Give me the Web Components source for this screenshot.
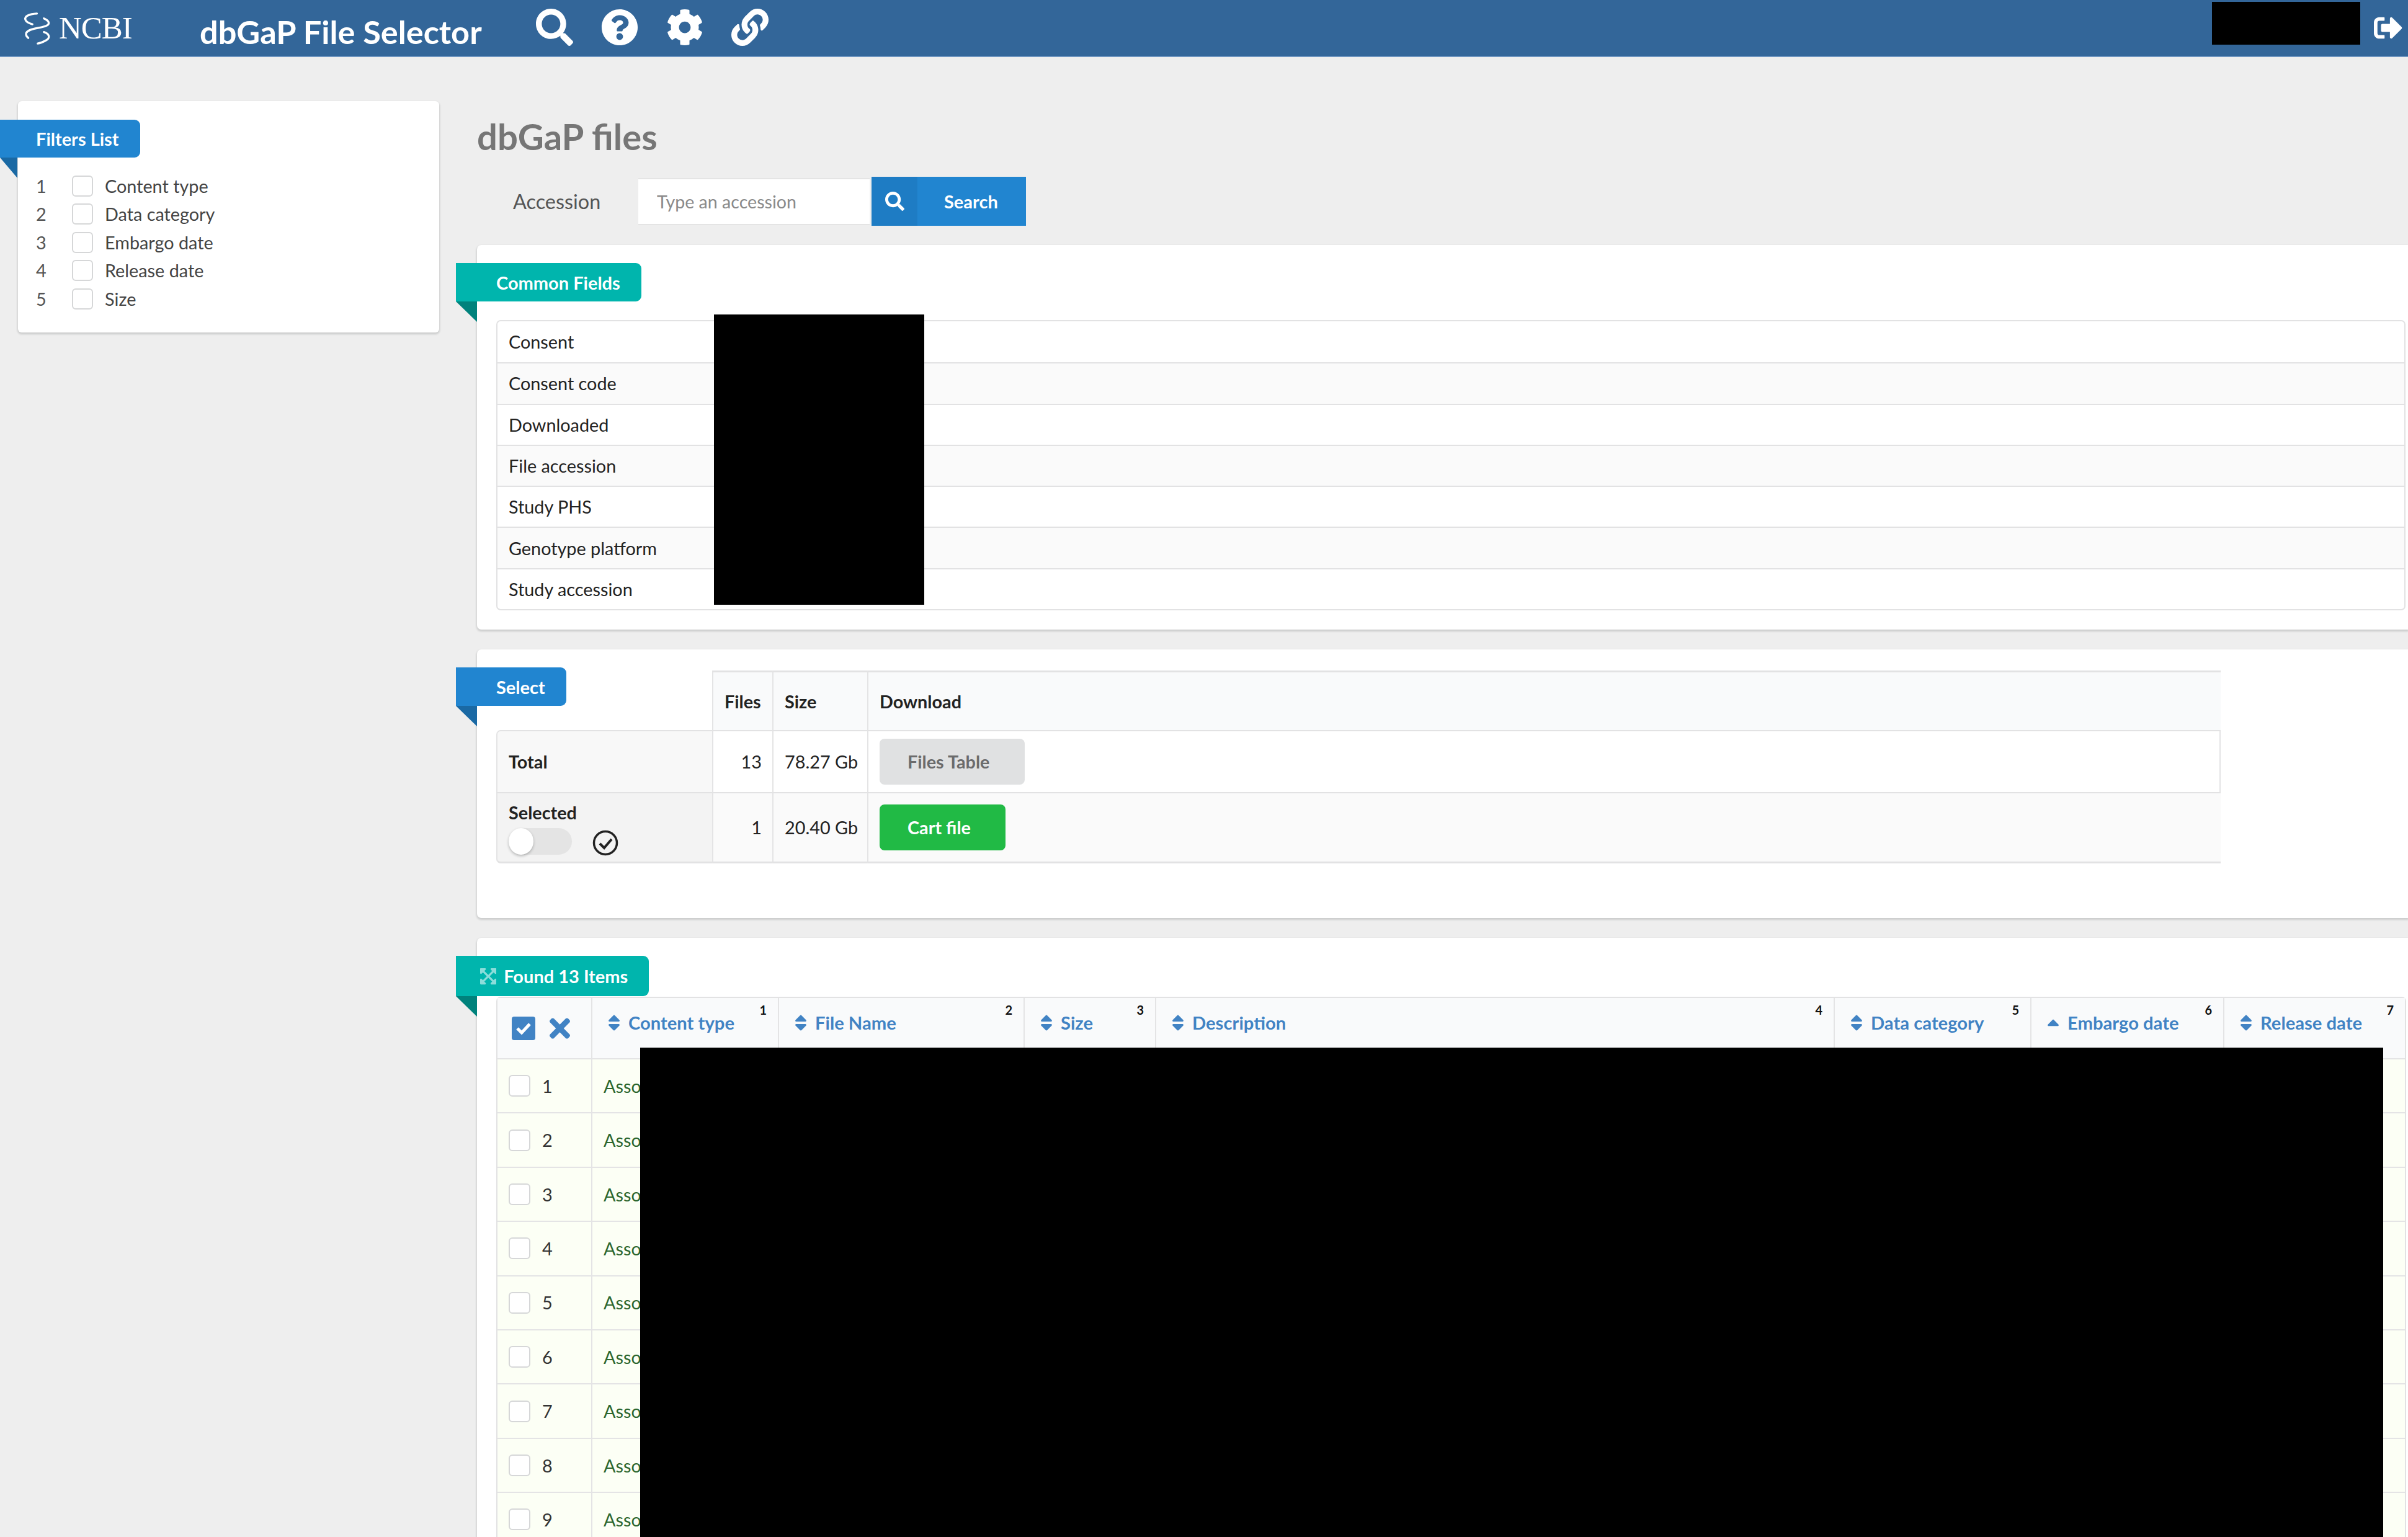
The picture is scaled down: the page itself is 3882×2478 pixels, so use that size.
<!doctype html>
<html lang="en">
<head>
<meta charset="utf-8">
<title>dbGaP File Selector</title>
<style>
	html, body { margin: 0; height: 100vh; overflow: hidden; background: #eeeeee; }
	body { font-family: Lato, "Open Sans", sans-serif; font-size: 28.8px; color: #333; }
</style>
</head>
<body>
<dbgap-app></dbgap-app>
<script>
const ICONS = {
	search: [512, "M505 442.7L405.3 343c-4.5-4.5-10.6-7-17-7H372c27.6-35.3 44-79.7 44-128C416 93.1 322.9 0 208 0S0 93.1 0 208s93.1 208 208 208c48.3 0 92.7-16.4 128-44v16.3c0 6.4 2.5 12.5 7 17l99.7 99.7c9.4 9.4 24.6 9.4 33.9 0l28.3-28.3c9.4-9.4 9.4-24.6.1-34zM208 336c-70.7 0-128-57.2-128-128 0-70.7 57.2-128 128-128 70.7 0 128 57.2 128 128 0 70.7-57.2 128-128 128z"],
	help: [512, "M504 256c0 136.997-111.043 248-248 248S8 392.997 8 256C8 119.083 119.043 8 256 8s248 111.083 248 248zM262.655 90c-54.497 0-89.255 22.957-116.549 63.758-3.536 5.286-2.353 12.415 2.715 16.258l34.699 26.31c5.205 3.947 12.621 3.008 16.665-2.122 17.864-22.658 30.113-35.797 57.303-35.797 20.429 0 45.698 13.148 45.698 32.958 0 14.976-12.363 22.667-32.534 33.976C247.128 238.528 216 254.941 216 296v4c0 6.627 5.373 12 12 12h56c6.627 0 12-5.373 12-12v-1.333c0-28.462 83.186-29.647 83.186-106.667 0-58.002-60.165-102-116.531-102zM256 338c-25.365 0-46 20.635-46 46 0 25.364 20.635 46 46 46s46-20.636 46-46c0-25.365-20.635-46-46-46z"],
	cog: [512, "M487.4 315.7l-42.6-24.6c4.3-23.2 4.3-47 0-70.2l42.6-24.6c4.9-2.8 7.1-8.6 5.5-14-11.1-35.6-30-67.8-54.7-94.6-3.8-4.1-10-5.1-14.8-2.3L380.8 110c-17.9-15.4-38.5-27.3-60.8-35.1V25.8c0-5.6-3.9-10.5-9.4-11.7-36.7-8.2-74.3-7.8-109.2 0-5.5 1.2-9.4 6.1-9.4 11.7V75c-22.2 7.9-42.8 19.8-60.8 35.1L88.7 85.5c-4.9-2.8-11-1.9-14.8 2.3-24.7 26.7-43.6 58.9-54.7 94.6-1.7 5.4.6 11.2 5.5 14L67.3 221c-4.3 23.2-4.3 47 0 70.2l-42.6 24.6c-4.9 2.8-7.1 8.6-5.5 14 11.1 35.6 30 67.8 54.7 94.6 3.8 4.1 10 5.1 14.8 2.3l42.6-24.6c17.9 15.4 38.5 27.3 60.8 35.1v49.2c0 5.6 3.9 10.5 9.4 11.7 36.7 8.2 74.3 7.8 109.2 0 5.5-1.2 9.4-6.1 9.4-11.7v-49.2c22.2-7.9 42.8-19.8 60.8-35.1l42.6 24.6c4.9 2.8 11 1.9 14.8-2.3 24.7-26.7 43.6-58.9 54.7-94.6 1.5-5.5-.7-11.3-5.6-14.1zM256 336c-44.1 0-80-35.9-80-80s35.9-80 80-80 80 35.9 80 80-35.9 80-80 80z"],
	link: [512, "M326.612 185.391c59.747 59.809 58.927 155.698.36 214.59-.11.12-.24.25-.36.37l-67.2 67.2c-59.27 59.27-155.699 59.262-214.96 0-59.27-59.26-59.27-155.7 0-214.96l37.106-37.106c9.84-9.84 26.786-3.3 27.294 10.606.648 17.722 3.826 35.527 9.69 52.721 1.986 5.822.567 12.262-3.783 16.612l-13.087 13.087c-28.026 28.026-28.905 73.66-1.155 101.96 28.024 28.579 74.086 28.749 102.325.51l67.2-67.19c28.191-28.191 28.073-73.757 0-101.83-3.701-3.694-7.429-6.564-10.341-8.569a16.037 16.037 0 0 1-6.947-12.606c-.396-10.567 3.348-21.456 11.698-29.806l21.054-21.055c5.521-5.521 14.182-6.199 20.584-1.731a152.482 152.482 0 0 1 20.522 17.197zM467.547 44.449c-59.261-59.262-155.69-59.27-214.96 0l-67.2 67.2c-.12.12-.25.25-.36.37-58.566 58.892-59.387 154.781.36 214.59a152.454 152.454 0 0 0 20.521 17.196c6.402 4.468 15.064 3.789 20.584-1.731l21.054-21.055c8.35-8.35 12.094-19.239 11.698-29.806a16.037 16.037 0 0 0-6.947-12.606c-2.912-2.005-6.64-4.875-10.341-8.569-28.073-28.073-28.191-73.639 0-101.83l67.2-67.19c28.239-28.239 74.3-28.069 102.325.51 27.75 28.3 26.872 73.934-1.155 101.96l-13.087 13.087c-4.35 4.35-5.769 10.79-3.783 16.612 5.864 17.194 9.042 34.999 9.69 52.721.509 13.906 17.454 20.446 27.294 10.606l37.106-37.106c59.271-59.259 59.271-155.699.001-214.959z"],
	signout: [512, "M497 273L329 441c-15 15-41 4.5-41-17v-96H152c-13.3 0-24-10.7-24-24v-96c0-13.3 10.7-24 24-24h136V88c0-21.4 25.9-32 41-17l168 168c9.3 9.4 9.3 24.6 0 34zM192 436v-40c0-6.6-5.4-12-12-12H96c-17.7 0-32-14.3-32-32V160c0-17.7 14.3-32 32-32h84c6.6 0 12-5.4 12-12V76c0-6.6-5.4-12-12-12H96c-53 0-96 43-96 96v192c0 53 43 96 96 96h84c6.6 0 12-5.4 12-12z"],
	arrows: [448, "M448 344v112a23.94 23.94 0 0 1-24 24H312c-21.39 0-32.09-25.9-17-41l36.2-36.2L224 295.6 116.77 402.9 153 439c15.09 15.1 4.39 41-17 41H24a23.94 23.94 0 0 1-24-24V344c0-21.4 25.89-32.1 41-17l36.19 36.2L184.46 256 77.18 148.7 41 185c-15.1 15.1-41 4.4-41-17V56a23.94 23.94 0 0 1 24-24h112c21.39 0 32.09 25.9 17 41l-36.2 36.2L224 216.4l107.23-107.3L295 73c-15.09-15.1-4.39-41 17-41h112a23.94 23.94 0 0 1 24 24v112c0 21.4-25.89 32.1-41 17l-36.19-36.2L263.54 256l107.28 107.3L407 327.1c15.1-15.2 41-4.5 41 16.9z"],
	times: [352, "M242.72 256l100.07-100.07c12.28-12.28 12.28-32.19 0-44.48l-22.24-22.24c-12.28-12.28-32.19-12.28-44.48 0L176 189.28 75.93 89.21c-12.28-12.28-32.19-12.28-44.48 0L9.21 111.45c-12.28 12.28-12.28 32.19 0 44.48L109.28 256 9.21 356.07c-12.28 12.28-12.28 32.19 0 44.48l22.24 22.24c12.28 12.28 32.2 12.28 44.48 0L176 322.72l100.07 100.07c12.28 12.28 32.2 12.28 44.48 0l22.24-22.24c12.28-12.28 12.28-32.19 0-44.48L242.72 256z"],
	sort: [320, "M41 288h238c21.4 0 32.1 25.9 17 41L177 448c-9.4 9.4-24.6 9.4-33.9 0L24 329c-15.1-15.1-4.4-41 17-41zm255-105L177 64c-9.4-9.4-24.6-9.4-33.9 0L24 183c-15.1 15.1-4.4 41 17 41h238c21.4 0 32.1-25.9 17-41z"],
	sortUp: [320, "M279 340H41c-21.4 0-32.1-25.9-17-41L143 180c9.4-9.4 24.6-9.4 33.9 0l119 119c15.2 15.1 4.5 41-16.9 41z"],
};

function icon(name, height) {
	const [boxWidth, d] = ICONS[name];
	return `<svg width="${(height * boxWidth) / 512}" height="${height}" viewBox="0 0 ${boxWidth} 512" fill="currentColor" style="display:block;flex:none" aria-hidden="true"><path d="${d}"/></svg>`;
}

class DbgapCheckbox extends HTMLElement {
	connectedCallback() {
		const size = this.getAttribute("size") || "34";
		this.attachShadow({ mode: "open" }).innerHTML = `
			<style>
				:host { display: block; flex: none; width: ${size}px; height: ${size}px; }
				div { box-sizing: border-box; width: 100%; height: 100%; background: #fff; border: 2px solid #d6d7d8; border-radius: 6px; }
			</style>
			<div></div>
		`;
	}
}

class DbgapRibbon extends HTMLElement {
	connectedCallback() {
		this.attachShadow({ mode: "open" }).innerHTML = `
			<style>
				:host {
					position: relative;
					box-sizing: border-box;
					width: fit-content;
					height: var(--ribbon-height, 62px);
					margin-left: var(--ribbon-shift, -65px);
					padding: 0 34px 0 var(--ribbon-pad, 65px);
					display: flex;
					align-items: center;
					gap: 12px;
					background: var(--ribbon-bg, #2185d0);
					color: #fff;
					font-weight: 700;
					font-size: 29px;
					border-radius: 0 9px 9px 0;
				}
				:host::after {
					content: "";
					position: absolute;
					left: 0;
					top: 100%;
					width: var(--ribbon-out, 34px);
					height: 33px;
					background: var(--ribbon-fold, #1a69a4);
					clip-path: polygon(0 0, 100% 0, 100% 100%);
				}
			</style>
			<slot></slot>
		`;
	}
}

class DbgapCard extends HTMLElement {
	connectedCallback() {
		this.attachShadow({ mode: "open" }).innerHTML = `
			<style>
				:host {
					display: block;
					box-sizing: border-box;
					background: #fff;
					border-radius: 7px 0 0 7px;
					padding: 29px 4px 31px 31px;
					box-shadow: 0 2px 3px 1px rgba(34, 36, 38, 0.16);
				}
			</style>
			<slot></slot>
		`;
	}
}

class DbgapHeader extends HTMLElement {
	connectedCallback() {
		const links = ["search", "help", "cog", "link"];
		this.attachShadow({ mode: "open" }).innerHTML = `
			<style>
				:host {
					display: flex;
					align-items: center;
					position: relative;
					box-sizing: border-box;
					height: 92px;
					background: #336699;
					border-bottom: 2px solid #6b93bf;
					color: #fff;
				}
				.logo { display: flex; align-items: center; width: 322px; padding-left: 37px; box-sizing: border-box; }
				.logo svg { flex: none; margin-right: 10px; }
				.logo span { font: 51px/1 "Liberation Serif", serif; letter-spacing: -1px; }
				h1 { margin: 10px 0 0; width: 519px; font-size: 52.3px; font-weight: 700; white-space: nowrap; }
				.tool { display: flex; justify-content: center; width: 105px; margin-top: -2px; }
				.signout { margin: 0 0 0 auto; display: flex; padding-right: 9px; }
				.user { position: absolute; left: 3566px; top: 3px; width: 239px; height: 69px; background: #000; }
			</style>
			<div class="logo">
				<svg width="48" height="55" viewBox="20 25 145 165" fill="none" stroke="#fff" stroke-width="10" stroke-linecap="round" aria-hidden="true">
					<path d="M88 36C50 38 26 50 32 66C36 78 50 84 66 88"/>
					<path d="M122 60C145 70 155 85 135 95C110 108 50 105 36 130C32 142 40 150 46 155"/>
					<path d="M122 126C150 135 155 155 130 168C115 176 105 180 92 182"/>
				</svg>
				<span>NCBI</span>
			</div>
			<h1>dbGaP File Selector</h1>
			${links.map((name) => `<div class="tool">${icon(name, 60)}</div>`).join("")}
			<div class="signout">${icon("signout", 46)}</div>
			<div class="user"></div>
		`;
	}
}

class DbgapFilters extends HTMLElement {
	connectedCallback() {
		const filters = ["Content type", "Data category", "Embargo date", "Release date", "Size"];
		this.attachShadow({ mode: "open" }).innerHTML = `
			<style>
				:host {
					display: block;
					box-sizing: border-box;
					height: 373px;
					margin-left: 29px;
					padding: 30px 0 0 29px;
					background: #fff;
					border-radius: 6px;
					box-shadow: 0 2px 3px 1px rgba(34, 36, 38, 0.16);
					--ribbon-shift: -58px;
					--ribbon-out: 28px;
					--ribbon-pad: 58px;
					--ribbon-height: 61px;
				}
				ol { list-style: none; margin: 23px 0 0; padding: 0; color: #444; }
				li { display: flex; align-items: center; height: 45.5px; }
				.n { width: 58px; color: #555; }
				dbgap-checkbox { margin-right: 19px; }
			</style>
			<dbgap-ribbon>Filters List</dbgap-ribbon>
			<ol>
				${filters.map((f, i) => `<li><span class="n">${i + 1}</span><dbgap-checkbox></dbgap-checkbox><span>${f}</span></li>`).join("")}
			</ol>
		`;
	}
}

class DbgapSearch extends HTMLElement {
	connectedCallback() {
		this.attachShadow({ mode: "open" }).innerHTML = `
			<style>
				:host { display: flex; align-items: center; height: 79px; padding-left: 58px; }
				label { width: 202px; color: #555; font-size: 32.4px; }
				input {
					box-sizing: border-box;
					width: 373px;
					height: 76px;
					margin-right: 3px;
					padding: 0 30px;
					font: 28.6px Lato, sans-serif;
					border: 0;
					border-top: 2px solid #e4e4e4;
					border-bottom: 2px solid #e4e4e4;
					outline: 0;
				}
				input::placeholder { color: #8a8a8a; opacity: 1; }
				button {
					display: flex;
					align-items: center;
					box-sizing: border-box;
					width: 249px;
					height: 79px;
					padding: 0;
					border: 0;
					background: #2185d0;
					color: #fff;
					font: 700 29px Lato, sans-serif;
				}
				.ic { display: flex; align-items: center; justify-content: center; width: 74px; height: 100%; background: #1e7cc4; }
				.tx { margin-left: 43px; }
			</style>
			<label>Accession</label>
			<input placeholder="Type an accession">
			<button><span class="ic">${icon("search", 31)}</span><span class="tx">Search</span></button>
		`;
	}
}

class DbgapCommonFields extends HTMLElement {
	connectedCallback() {
		const fields = ["Consent", "Consent code", "Downloaded", "File accession", "Study PHS", "Genotype platform", "Study accession"];
		this.attachShadow({ mode: "open" }).innerHTML = `
			<style>
				:host { display: block; box-sizing: border-box; border: 2px solid #e2e2e3; border-radius: 7px; color: #222; }
				div { box-sizing: border-box; display: flex; align-items: center; height: 66.3px; padding-left: 18px; border-top: 2px solid #e2e2e3; }
				div:first-of-type { border-top: 0; }
				div:nth-of-type(even) { background: #fafafa; }
			</style>
			${fields.map((f) => `<div>${f}</div>`).join("")}
		`;
	}
}

class DbgapSelectSummary extends HTMLElement {
	connectedCallback() {
		this.attachShadow({ mode: "open" }).innerHTML = `
			<style>
				:host { display: block; width: 2780px; color: #222; }
				table { width: 100%; table-layout: fixed; border-collapse: separate; border-spacing: 0; }
				th, td { box-sizing: border-box; padding: 0 0 0 18px; border-left: 2px solid #e4e4e5; border-top: 2px solid #e2e2e3; text-align: left; }
				thead th { height: 96px; background: #f9fafb; font-weight: 700; border-top-width: 3px; }
				thead th.blank { background: none; border: 0; }
				tr.total td { height: 100px; background: #fff; }
				tr.total td:last-child { border-right: 2px solid #e4e4e5; }
				tr.selected td { height: 115px; background: #fafafa; border-bottom: 3px solid #e2e2e3; }
				th[scope="row"] { font-weight: 700; border-left-width: 2px; }
				tr.total th { background: #f8f8f8; border-radius: 7px 0 0 0; }
				tr.selected th { background: #f3f3f3; border-bottom: 3px solid #e2e2e3; border-radius: 0 0 0 7px; vertical-align: top; padding-top: 14px; line-height: 34px; }
				td.num { padding: 0 17px 0 0; text-align: right; }
				.btn { display: flex; align-items: center; box-sizing: border-box; height: 74px; padding-left: 45px; border-radius: 8px; font-weight: 700; }
				.files { width: 234px; background: #e0e1e2; color: #6b6b6c; }
				.cart { width: 203px; background: #21ba45; color: #fff; }
				.state { display: flex; align-items: center; margin-top: 5px; }
				.toggle { position: relative; width: 102px; height: 43px; border-radius: 22px; background: #e4e4e4; }
				.toggle::after { content: ""; position: absolute; left: 0; top: 0; width: 40px; height: 43px; border-radius: 50%; background: #fff; box-shadow: 0 2px 4px rgba(34, 36, 38, 0.3); }
				.check { margin: 6px 0 0 33px; }
			</style>
			<table>
				<colgroup><col style="width:348px"><col style="width:97px"><col style="width:153px"><col></colgroup>
				<thead><tr><th class="blank"></th><th>Files</th><th>Size</th><th>Download</th></tr></thead>
				<tbody>
					<tr class="total"><th scope="row">Total</th><td class="num">13</td><td>78.27 Gb</td><td><div class="btn files">Files Table</div></td></tr>
					<tr class="selected">
						<th scope="row">Selected
							<div class="state">
								<div class="toggle"></div>
								<svg class="check" width="42" height="42" viewBox="0 0 42 42" fill="none" stroke="#222" aria-hidden="true"><circle cx="21" cy="21" r="18.5" stroke-width="3.5"/><path d="M12 22l7 7 12-14" stroke-width="4"/></svg>
							</div>
						</th>
						<td class="num">1</td><td>20.40 Gb</td><td><div class="btn cart">Cart file</div></td>
					</tr>
				</tbody>
			</table>
		`;
	}
}

class DbgapFilesTable extends HTMLElement {
	connectedCallback() {
		const columns = [
			["Content type", 301, "sort"], ["File Name", 396, "sort"], ["Size", 212, "sort"], ["Description", 1094, "sort"],
			["Data category", 317, "sort"], ["Embargo date", 311, "sortUp"], ["Release date", 293, "sort"],
		];
		const rows = [1, 2, 3, 4, 5, 6, 7, 8, 9];
		this.attachShadow({ mode: "open" }).innerHTML = `
			<style>
				:host { display: block; position: relative; color: #2c662d; }
				table { width: 100%; table-layout: fixed; border-collapse: separate; border-spacing: 0; border: 2px solid #e2e2e3; border-bottom: 0; border-radius: 7px 7px 0 0; }
				th, td { box-sizing: border-box; border-left: 2px solid #e4e4e5; text-align: left; padding: 0; }
				th:first-child, td:first-child { border-left: 0; }
				thead th { position: relative; height: 97px; background: #f9fafb; color: #4183c4; font-weight: 700; font-size: 29.2px; vertical-align: top; }
				td { height: 87.4px; background: #fcfff5; border-top: 2px solid #e4e4e5; }
				.title { display: flex; align-items: center; gap: 13px; margin: 22px 0 0 25px; white-space: nowrap; }
				sup { position: absolute; top: 6px; right: 18px; color: #111; font-size: 20px; line-height: 26px; }
				.tools { display: flex; align-items: center; gap: 23px; margin: 25px 0 0 23px; color: #4183c4; }
				.all { display: flex; align-items: center; justify-content: center; width: 38px; height: 38px; background: #4183c4; border-radius: 4px; color: #fff; }
				.rowhead { display: flex; align-items: center; gap: 19px; padding-left: 18px; color: #333; }
				.cell { padding-left: 18px; }
			</style>
			<table>
				<colgroup><col style="width:151px">${columns.map((c) => `<col style="width:${c[1]}px">`).join("")}</colgroup>
				<thead>
					<tr>
						<th>
							<div class="tools">
								<span class="all"><svg width="26" height="22" viewBox="0 0 26 22" fill="none" stroke="#fff" stroke-width="5" aria-hidden="true"><path d="M3 11l7 7L23 4"/></svg></span>
								${icon("times", 48)}
							</div>
						</th>
						${columns.map((c, i) => `<th><div class="title">${icon(c[2], 32)}<span>${c[0]}</span></div><sup>${i + 1}</sup></th>`).join("")}
					</tr>
				</thead>
				<tbody>
					${rows.map((n) => `<tr><td><div class="rowhead"><dbgap-checkbox size="35"></dbgap-checkbox><span>${n}</span></div></td><td class="cell">Asso</td><td></td><td></td><td></td><td></td><td></td><td></td></tr>`).join("")}
				</tbody>
			</table>
		`;
	}
}

class DbgapRedaction extends HTMLElement {
	connectedCallback() {
		this.attachShadow({ mode: "open" }).innerHTML = `
			<style>
				:host { display: block; position: absolute; background: #000; }
			</style>
		`;
	}
}

class DbgapApp extends HTMLElement {
	connectedCallback() {
		this.attachShadow({ mode: "open" }).innerHTML = `
			<style>
				:host { display: block; }
				.page { display: grid; grid-template-columns: 708px 1fr; column-gap: 61px; position: relative; }
				aside { padding-top: 71px; }
				main { min-width: 0; }
				h2 { margin: 0; padding-top: 93px; font-size: 58px; line-height: 70px; font-weight: 700; color: #767676; }
				dbgap-search { margin-top: 30px; margin-bottom: 31px; }
				dbgap-card { margin-bottom: 32px; }
				.teal { --ribbon-bg: #00b5ad; --ribbon-fold: #00827c; }
				.common dbgap-ribbon { margin-bottom: 30px; }
				.select dbgap-ribbon { margin-bottom: -57px; }
				.select { padding-bottom: 88px; }
				.found dbgap-ribbon { margin-bottom: 1px; height: 65px; padding-left: 39px; }
				.found svg { opacity: 0.55; }
				.r1 { left: 1151px; top: 415px; width: 339px; height: 468px; }
				.r2 { left: 1032px; top: 1597px; width: 2810px; height: 900px; }
			</style>
			<dbgap-header></dbgap-header>
			<div class="page">
				<aside><dbgap-filters></dbgap-filters></aside>
				<main>
					<h2>dbGaP files</h2>
					<dbgap-search></dbgap-search>
					<dbgap-card class="common teal">
						<dbgap-ribbon>Common Fields</dbgap-ribbon>
						<dbgap-common-fields></dbgap-common-fields>
					</dbgap-card>
					<dbgap-card class="select">
						<dbgap-ribbon>Select</dbgap-ribbon>
						<dbgap-select-summary></dbgap-select-summary>
					</dbgap-card>
					<dbgap-card class="found teal">
						<dbgap-ribbon>${icon("arrows", 30)}Found 13 Items</dbgap-ribbon>
						<dbgap-files-table></dbgap-files-table>
					</dbgap-card>
				</main>
				<dbgap-redaction class="r1"></dbgap-redaction>
				<dbgap-redaction class="r2"></dbgap-redaction>
			</div>
		`;
	}
}

customElements.define("dbgap-checkbox", DbgapCheckbox);
customElements.define("dbgap-ribbon", DbgapRibbon);
customElements.define("dbgap-card", DbgapCard);
customElements.define("dbgap-header", DbgapHeader);
customElements.define("dbgap-filters", DbgapFilters);
customElements.define("dbgap-search", DbgapSearch);
customElements.define("dbgap-common-fields", DbgapCommonFields);
customElements.define("dbgap-select-summary", DbgapSelectSummary);
customElements.define("dbgap-files-table", DbgapFilesTable);
customElements.define("dbgap-redaction", DbgapRedaction);
customElements.define("dbgap-app", DbgapApp);
</script>
</body>
</html>
